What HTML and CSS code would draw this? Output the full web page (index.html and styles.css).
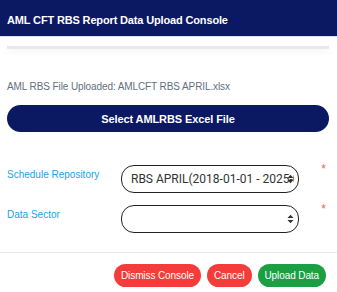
FILE: index.html
```html
<!DOCTYPE html>
<html lang="en">
<head>
    <meta charset="UTF-8">
    <meta name="viewport" content="width=device-width, initial-scale=1.0">
    <title>AML CFT RBS Report Data Upload Console</title>
    <link rel="stylesheet" href="styles.css">
</head>
<body>
    <div class="modal">
        <div class="modal-header">
            <h1>AML CFT RBS Report Data Upload Console</h1>
        </div>

        <div class="modal-body">
            <div class="progress-track"></div>

            <p class="upload-info">AML RBS File Uploaded: AMLCFT RBS APRIL.xlsx</p>

            <button type="button" class="btn btn-select">Select AMLRBS Excel File</button>

            <div class="form-fields">
                <div class="form-row">
                    <label class="form-label">Schedule Repository</label>
                    <div class="select-box">
                        <span class="select-value">RBS APRIL(2018-01-01 - 2025-01-01)</span>
                        <svg class="select-arrow" width="7" height="10" viewBox="0 0 7 10">
                            <path d="M0.5 4 L3.5 0.8 L6.5 4 Z M0.5 6 L3.5 9.2 L6.5 6 Z" fill="#333"/>
                        </svg>
                    </div>
                    <span class="required">*</span>
                </div>

                <div class="form-row">
                    <label class="form-label">Data Sector</label>
                    <div class="select-box">
                        <span class="select-value"></span>
                        <svg class="select-arrow" width="7" height="10" viewBox="0 0 7 10">
                            <path d="M0.5 4 L3.5 0.8 L6.5 4 Z M0.5 6 L3.5 9.2 L6.5 6 Z" fill="#333"/>
                        </svg>
                    </div>
                    <span class="required">*</span>
                </div>
            </div>
        </div>

        <div class="modal-footer">
            <button type="button" class="btn btn-pill btn-danger">Dismiss Console</button>
            <button type="button" class="btn btn-pill btn-danger">Cancel</button>
            <button type="button" class="btn btn-pill btn-success">Upload Data</button>
        </div>
    </div>
</body>
</html>
```

FILE: styles.css
```css
:root {
    --navy: #0b1862;
    --label-blue: #1ba1e6;
    --danger: #f43c3a;
    --success: #1a9f43;
}

* {
    margin: 0;
    padding: 0;
    box-sizing: border-box;
    font-family: 'Liberation Sans', Arial, sans-serif;
}

body {
    background: white;
    width: 337px;
}

.modal-header {
    height: 37px;
    background: var(--navy);
    display: flex;
    align-items: center;
    padding: 0 7px;
    border-bottom: 1px solid #dfe3ee;
}

.modal-header h1 {
    color: white;
    font-size: 11px;
    font-weight: 700;
    letter-spacing: -0.15px;
    margin-top: 3px;
}

.modal-body {
    padding: 9px 8px 19px 7px;
}

.progress-track {
    height: 3px;
    background: #e9e9e9;
    box-shadow: 0 3px 6px rgba(0, 0, 0, 0.06);
}

.upload-info {
    margin-top: 32px;
    font-size: 10px;
    color: #5f6f7d;
    letter-spacing: -0.1px;
}

.btn {
    border: none;
    cursor: pointer;
    font-weight: 700;
    color: white;
}

.btn-select {
    display: block;
    width: 100%;
    height: 27px;
    margin-top: 13px;
    background: var(--navy);
    border-radius: 14px;
    font-size: 11px;
    letter-spacing: -0.1px;
}

.form-fields {
    display: flex;
    flex-direction: column;
    gap: 12px;
    margin-top: 33px;
}

.form-row {
    display: grid;
    grid-template-columns: 114px 178px 1fr;
    align-items: start;
}

.form-label {
    font-size: 10px;
    color: var(--label-blue);
    padding-top: 4px;
}

.select-box {
    height: 28px;
    border: 1px solid #222;
    border-radius: 13px;
    display: flex;
    align-items: center;
    padding: 0 4px 0 9px;
    overflow: hidden;
}

.select-value {
    flex: 1;
    font-family: Roboto, sans-serif;
    font-size: 12px;
    color: #333;
    white-space: nowrap;
    overflow: hidden;
}

.select-arrow {
    flex: none;
    margin-left: -7px;
}

.required {
    color: #f45a5a;
    font-size: 12px;
    text-align: right;
    padding-right: 3px;
    margin-top: -3px;
}

.modal-footer {
    border-top: 1px solid #e6e6e6;
    display: flex;
    justify-content: flex-end;
    gap: 6px;
    padding: 11px 11px 0;
}

.btn-pill {
    height: 23px;
    padding: 0 7px;
    border-radius: 12px;
    font-size: 10px;
    font-weight: 400;
    letter-spacing: -0.1px;
}

.btn-danger {
    background: var(--danger);
}

.btn-success {
    background: var(--success);
}
```
